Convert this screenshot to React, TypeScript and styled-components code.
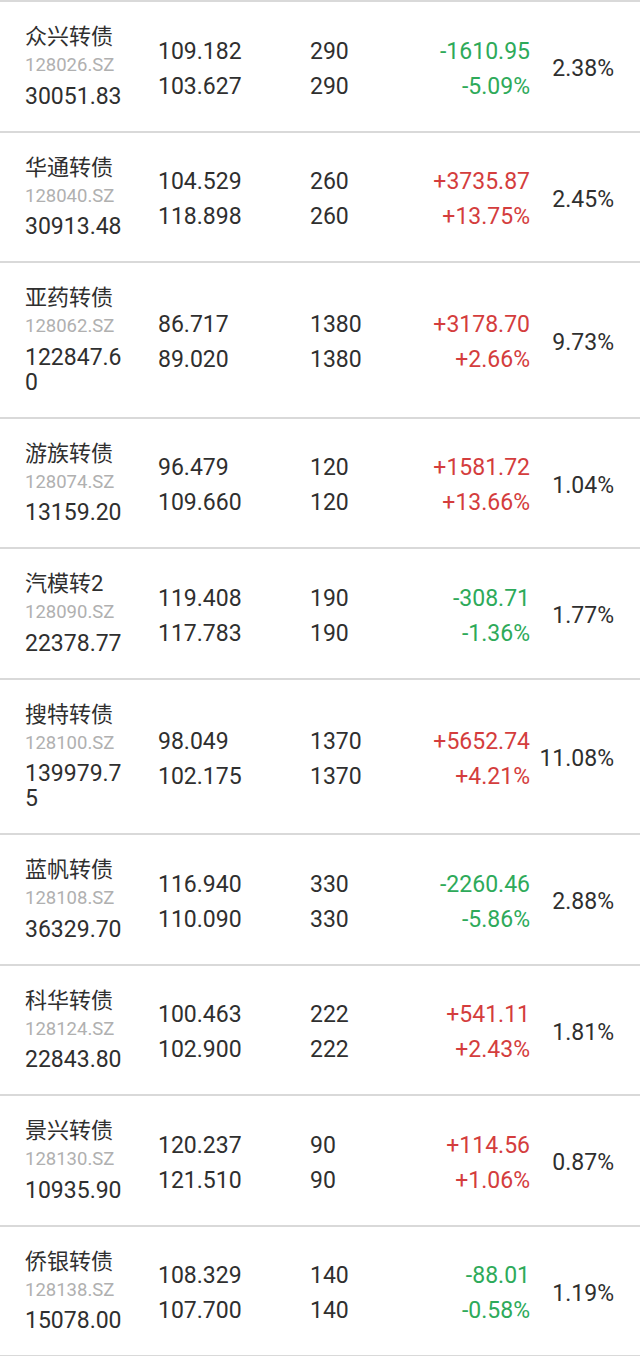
import React from "react"
import styled, { createGlobalStyle } from "styled-components"

const GlobalStyle = createGlobalStyle`
  html, body {
    margin: 0;
    padding: 0;
    background: #fff;
  }
  body {
    font-family: Roboto, "Noto Sans CJK SC", sans-serif;
    color: #333;
  }
`

const List = styled.div`
  width: 640px;
  border-bottom: 2px solid #d9d9d9;
`

const Row = styled.div`
  display: grid;
  grid-template-columns: 133px 152px 220px 1fr;
  align-items: center;
  border-top: 2px solid #d9d9d9;
  padding: 21px 26px 22px 25px;
`

const Info = styled.div`
  width: 101px;
`

const Name = styled.div`
  font-size: 22px;
  line-height: 28px;
  color: #2f2f2f;
  white-space: nowrap;
`

const Code = styled.div`
  font-size: 18.5px;
  line-height: 28px;
  color: #b0b0b0;
`

const Amount = styled.div`
  margin-top: 4.5px;
  font-size: 23px;
  line-height: 25px;
  color: #2f2f2f;
  word-break: break-all;
`

const Lines = styled.div<{ $right?: boolean }>`
  display: flex;
  flex-direction: column;
  text-align: ${(p) => (p.$right ? "right" : "left")};
`

const Prices = styled(Lines)`
  margin-top: 6px;
`

const Holding = styled.div`
  display: flex;
  justify-content: space-between;
  margin-top: 6px;
`

const Value = styled.span<{ $tone?: "up" | "down" }>`
  font-size: 23px;
  line-height: 35px;
  color: ${(p) =>
    p.$tone === "up" ? "#d43d3d" : p.$tone === "down" ? "#2eaa5a" : "#2f2f2f"};
`

const Ratio = styled.div`
  margin-top: 6px;
  font-size: 23px;
  text-align: right;
  color: #2f2f2f;
`

type Bond = {
  name: string
  code: string
  amount: string
  price: [string, string]
  qty: string
  profit: string
  pct: string
  ratio: string
}

const bonds: Bond[] = [
  { name: "众兴转债", code: "128026.SZ", amount: "30051.83", price: ["109.182", "103.627"], qty: "290", profit: "-1610.95", pct: "-5.09%", ratio: "2.38%" },
  { name: "华通转债", code: "128040.SZ", amount: "30913.48", price: ["104.529", "118.898"], qty: "260", profit: "+3735.87", pct: "+13.75%", ratio: "2.45%" },
  { name: "亚药转债", code: "128062.SZ", amount: "122847.60", price: ["86.717", "89.020"], qty: "1380", profit: "+3178.70", pct: "+2.66%", ratio: "9.73%" },
  { name: "游族转债", code: "128074.SZ", amount: "13159.20", price: ["96.479", "109.660"], qty: "120", profit: "+1581.72", pct: "+13.66%", ratio: "1.04%" },
  { name: "汽模转2", code: "128090.SZ", amount: "22378.77", price: ["119.408", "117.783"], qty: "190", profit: "-308.71", pct: "-1.36%", ratio: "1.77%" },
  { name: "搜特转债", code: "128100.SZ", amount: "139979.75", price: ["98.049", "102.175"], qty: "1370", profit: "+5652.74", pct: "+4.21%", ratio: "11.08%" },
  { name: "蓝帆转债", code: "128108.SZ", amount: "36329.70", price: ["116.940", "110.090"], qty: "330", profit: "-2260.46", pct: "-5.86%", ratio: "2.88%" },
  { name: "科华转债", code: "128124.SZ", amount: "22843.80", price: ["100.463", "102.900"], qty: "222", profit: "+541.11", pct: "+2.43%", ratio: "1.81%" },
  { name: "景兴转债", code: "128130.SZ", amount: "10935.90", price: ["120.237", "121.510"], qty: "90", profit: "+114.56", pct: "+1.06%", ratio: "0.87%" },
  { name: "侨银转债", code: "128138.SZ", amount: "15078.00", price: ["108.329", "107.700"], qty: "140", profit: "-88.01", pct: "-0.58%", ratio: "1.19%" },
]

const BondRow = ({ b }: { b: Bond }) => {
  const tone = b.profit.startsWith("-") ? "down" : "up"
  return (
    <Row>
      <Info>
        <Name>{b.name}</Name>
        <Code>{b.code}</Code>
        <Amount>{b.amount}</Amount>
      </Info>
      <Prices>
        <Value>{b.price[0]}</Value>
        <Value>{b.price[1]}</Value>
      </Prices>
      <Holding>
        <Lines>
          <Value>{b.qty}</Value>
          <Value>{b.qty}</Value>
        </Lines>
        <Lines $right>
          <Value $tone={tone}>{b.profit}</Value>
          <Value $tone={tone}>{b.pct}</Value>
        </Lines>
      </Holding>
      <Ratio>{b.ratio}</Ratio>
    </Row>
  )
}

export default function App() {
  return (
    <>
      <GlobalStyle />
      <List>
        {bonds.map((b) => (
          <BondRow key={b.code} b={b} />
        ))}
      </List>
    </>
  )
}
